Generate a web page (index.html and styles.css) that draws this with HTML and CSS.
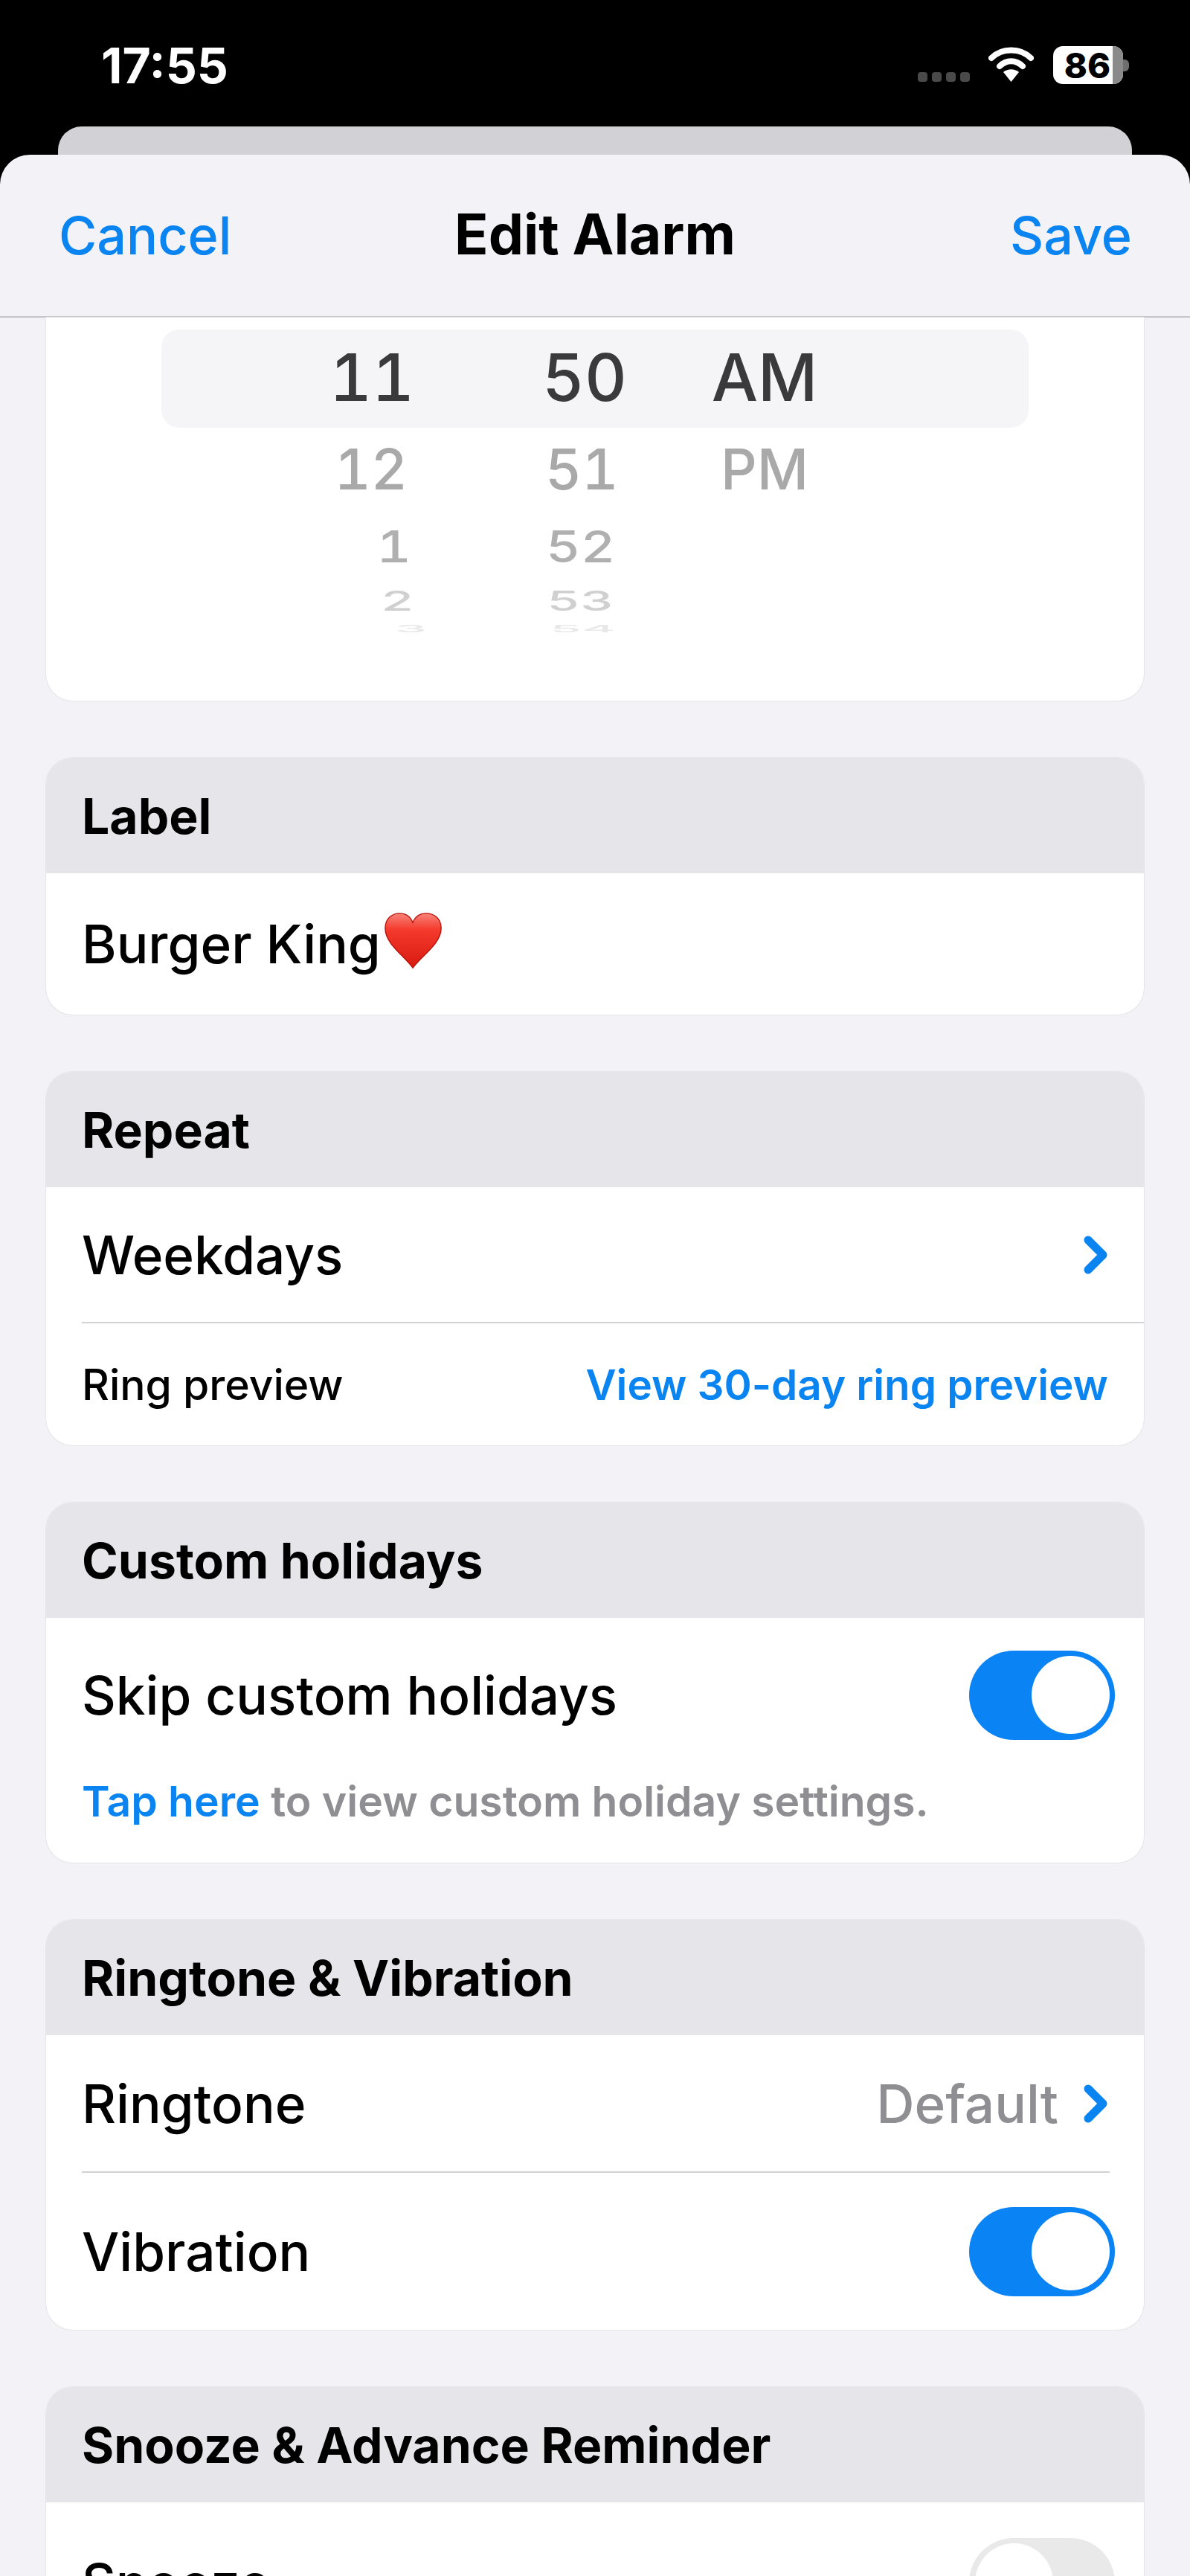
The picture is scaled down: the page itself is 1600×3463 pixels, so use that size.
FILE: index.html
```html
<!DOCTYPE html>
<html>
	<head>
		<title>Edit Alarm</title>
		<link rel="stylesheet" href="styles.css">
	</head>
	<body>
		<div class="status">
			<span class="clock">17:55</span>
			<div class="status-right">
				<div class="signal"><i></i><i></i><i></i><i></i></div>
				<svg class="wifi" width="61" height="47" viewBox="0 0 61 47">
					<path d="M4 15 C18 1 43 1 57 15" fill="none" stroke="#fff" stroke-width="8" stroke-linecap="round"/>
					<path d="M15 26 C24 17 37 17 46 26" fill="none" stroke="#fff" stroke-width="8" stroke-linecap="round"/>
					<path d="M30.5 47 L20 34 C26 29 35 29 41 34 Z" fill="#fff"/>
				</svg>
				<div class="battery"><span class="battery-num">86</span><span class="battery-rest"></span></div>
				<span class="battery-cap"></span>
			</div>
		</div>
		<div class="back-sheet"></div>
		<div class="sheet">
			<div class="nav">
				<a class="nav-link">Cancel</a>
				<span class="nav-title">Edit Alarm</span>
				<a class="nav-link">Save</a>
			</div>
			<div class="content">
				<div class="card picker-card">
					<div class="picker-band"></div>
					<div class="picker">
						<div class="wheel hours">
							<span class="w0">11</span><span class="w1">12</span><span class="w2">1</span><span class="w3">2</span><span class="w4">3</span>
						</div>
						<div class="wheel minutes">
							<span class="w0">50</span><span class="w1">51</span><span class="w2">52</span><span class="w3">53</span><span class="w4">54</span>
						</div>
						<div class="wheel ampm">
							<span class="w0">AM</span><span class="w1">PM</span>
						</div>
					</div>
				</div>

				<div class="card">
					<div class="card-head">Label</div>
					<div class="row row-label">
						<span>Burger King</span>
						<svg class="heart" width="80" height="78" viewBox="0 0 84 80">
							<defs>
								<linearGradient id="heartfill" x1="0" y1="0" x2="0" y2="1">
									<stop offset="0" stop-color="#f8837a"/>
									<stop offset="0.3" stop-color="#f43a2c"/>
									<stop offset="1" stop-color="#d81a10"/>
								</linearGradient>
							</defs>
							<path d="M41 78 C28 60 2 44 2 22 C2 9 11 1 22 1 C31 1 38 6 41 14 C44 6 51 1 60 1 C72 1 81 9 81 22 C81 44 54 60 41 78 Z" fill="url(#heartfill)" stroke="#b8140c" stroke-width="1.5"/>
						</svg>
					</div>
				</div>

				<div class="card">
					<div class="card-head">Repeat</div>
					<div class="row row-repeat">
						<span>Weekdays</span>
						<svg class="chevron" width="32" height="52" viewBox="0 0 32 52"><path d="M6 6 L26 26 L6 46" fill="none" stroke="#0a84f0" stroke-width="11" stroke-linecap="round" stroke-linejoin="round"/></svg>
					</div>
					<div class="row-preview">
						<span>Ring preview</span>
						<a class="preview-link">View 30-day ring preview</a>
					</div>
				</div>

				<div class="card">
					<div class="card-head">Custom holidays</div>
					<div class="row row-toggle">
						<span>Skip custom holidays</span>
						<div class="toggle on"><span class="knob"></span></div>
					</div>
					<div class="holiday-note"><a>Tap here</a> to view custom holiday settings.</div>
				</div>

				<div class="card">
					<div class="card-head">Ringtone &amp; Vibration</div>
					<div class="row row-ringtone">
						<span>Ringtone</span>
						<div class="row-value">
							<span class="muted">Default</span>
							<svg class="chevron" width="32" height="52" viewBox="0 0 32 52"><path d="M6 6 L26 26 L6 46" fill="none" stroke="#0a84f0" stroke-width="11" stroke-linecap="round" stroke-linejoin="round"/></svg>
						</div>
					</div>
					<div class="divider"></div>
					<div class="row row-toggle row-vibration">
						<span>Vibration</span>
						<div class="toggle on"><span class="knob"></span></div>
					</div>
				</div>

				<div class="card">
					<div class="card-head">Snooze &amp; Advance Reminder</div>
					<div class="row row-toggle row-snooze">
						<span>Snooze</span>
						<div class="toggle off"><span class="knob"></span></div>
					</div>
				</div>
			</div>
		</div>
	</body>
</html>
```

FILE: styles.css
```css
html, body {
	margin: 0;
	padding: 0;
	height: 3463px;
	overflow: hidden;
	background: #000;
	font-family: Inter, "Liberation Sans", sans-serif;
}
.status {
	height: 170px;
	display: flex;
	justify-content: space-between;
	align-items: flex-start;
	color: #fff;
}
.clock {
	font-size: 66px;
	font-weight: 700;
	line-height: 62px;
	margin: 57px 0 0 136px;
}
.status-right {
	display: flex;
	align-items: flex-start;
	margin: 62px 82px 0 0;
}
.signal {
	display: flex;
	gap: 6px;
	margin: 35px 25px 0 0;
}
.signal i {
	width: 13px;
	height: 13px;
	border-radius: 4px;
	background: #4a4a4a;
}
.wifi {
	margin: 1px 26px 0 0;
}
.battery {
	width: 94px;
	height: 51px;
	background: #fff;
	border-radius: 13px;
	display: flex;
	color: #000;
}
.battery-num {
	width: 80px;
	padding-left: 12px;
	box-sizing: border-box;
	text-align: center;
	font-size: 47px;
	font-weight: 800;
	line-height: 51px;
}
.battery-rest {
	flex: 1;
	background: #8a8a8a;
	border-radius: 0 13px 13px 0;
}
.battery-cap {
	width: 8px;
	height: 16px;
	margin-top: 18px;
	border-radius: 0 6px 6px 0;
	background: #6e6e6e;
}
.back-sheet {
	height: 38px;
	margin: 0 78px;
	background: #d1d1d6;
	border-radius: 32px 32px 0 0;
}
.sheet {
	height: 3255px;
	overflow: hidden;
	background: #f2f2f7;
	border-radius: 40px 40px 0 0;
}
.nav {
	height: 217px;
	padding: 0 78px 0 79px;
	display: flex;
	justify-content: space-between;
	align-items: center;
	border-bottom: 2px solid #c6c6c8;
	position: relative;
}
.nav-link {
	color: #0a84f0;
	font-size: 70px;
	font-weight: 500;
}
.nav-title {
	position: absolute;
	left: 0;
	right: 0;
	text-align: center;
	font-size: 75px;
	font-weight: 700;
	color: #000;
	margin-top: -4px;
	pointer-events: none;
}
.content {
	display: flex;
	flex-direction: column;
	gap: 77px;
	padding: 0 62px;
}
.card {
	background: #fff;
	border-radius: 36px;
	overflow: hidden;
	box-shadow: 0 0 0 1px #e4e4e9;
}
.card-head {
	height: 155px;
	padding-left: 48px;
	display: flex;
	align-items: center;
	background: #e5e5ea;
	font-size: 66px;
	font-weight: 700;
	color: #000;
}
.row {
	display: flex;
	justify-content: space-between;
	align-items: center;
	padding: 0 49px 0 48px;
	font-size: 71px;
	font-weight: 500;
	color: #000;
}

/* time picker */
.picker-card {
	height: 515px;
	border-radius: 0 0 36px 36px;
	position: relative;
}
.picker-band {
	position: absolute;
	left: 155px;
	top: 16px;
	width: 1166px;
	height: 132px;
	border-radius: 24px;
	background: #f5f5f7;
}
.picker {
	position: relative;
	display: flex;
}
.wheel {
	display: flex;
	flex-direction: column;
	color: #3a3a3c;
	font-weight: 500;
	font-variant-numeric: tabular-nums;
}
.wheel span {
	display: block;
}
.hours {
	width: 495px;
	align-items: flex-end;
}
.minutes {
	width: 186px;
	margin-left: 172px;
	align-items: flex-start;
}
.ampm {
	width: 200px;
	margin-left: 13px;
	align-items: center;
}
.w0 {
	font-size: 88px;
	line-height: 88px;
	margin-top: 36px;
}
.w1 {
	font-size: 76px;
	line-height: 76px;
	margin-top: 41px;
	color: #a9a9a9;
}
.w2 {
	font-size: 72px;
	line-height: 60px;
	margin-top: 36px;
	color: #b0b0b0;
	transform: scaleY(0.83);
}
.w3 {
	font-size: 70px;
	line-height: 40px;
	margin-top: 24px;
	color: #d0d0d0;
	transform: scaleY(0.52);
}
.w4 {
	font-size: 68px;
	line-height: 20px;
	margin-top: 7px;
	color: #e8e8e8;
	transform: scaleY(0.2);
}
.hours .w1 { margin-right: 9px; }
.hours .w2 { margin-right: 4px; }
.hours .w3 { margin-right: 0; }
.hours .w4 { margin-right: -18px; }
.minutes .w1 { margin-left: 4px; }
.minutes .w2 { margin-left: 5px; }
.minutes .w3 { margin-left: 6px; }
.minutes .w4 { margin-left: 10px; }

/* rows */
.row-label {
	height: 190px;
	justify-content: flex-start;
}
.heart {
	margin: -8px 0 0 4px;
}
.row-repeat {
	height: 181px;
}
.row-preview {
	height: 164px;
	margin-left: 48px;
	padding-right: 48px;
	display: flex;
	justify-content: space-between;
	align-items: center;
	border-top: 2px solid #d1d1d6;
	font-size: 57px;
	font-weight: 500;
	color: #000;
}
.preview-link {
	color: #0a84f0;
	font-size: 56.5px;
	font-weight: 600;
}
.row-toggle {
	height: 208px;
	padding-right: 39px;
}
.toggle {
	width: 196px;
	height: 120px;
	border-radius: 60px;
	position: relative;
}
.toggle.on {
	background: #0a84f4;
}
.toggle.off {
	background: #e9e9ea;
}
.knob {
	position: absolute;
	top: 7px;
	width: 105px;
	height: 105px;
	border-radius: 50%;
	background: #fff;
}
.on .knob { right: 7px; }
.off .knob { left: 8px; }
.holiday-note {
	height: 121px;
	padding-left: 48px;
	font-size: 57px;
	font-weight: 600;
	line-height: 78px;
	color: #8e8e93;
}
.holiday-note a {
	color: #0a84f0;
}
.row-ringtone {
	height: 183px;
	padding-right: 49px;
}
.row-value {
	display: flex;
	align-items: center;
	gap: 34px;
}
.muted {
	color: #8e8e93;
}
.divider {
	height: 2px;
	margin: 0 46px 0 48px;
	background: #d1d1d6;
}
.row-vibration {
	height: 211px;
}
.row-snooze {
	height: 216px;
}
```
